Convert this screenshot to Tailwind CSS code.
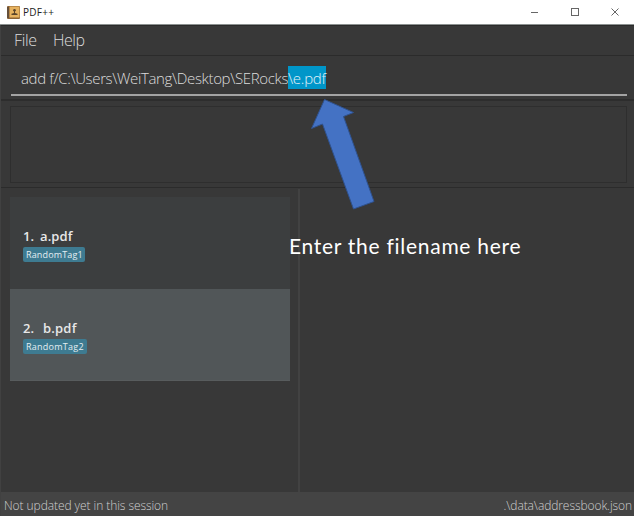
<!DOCTYPE html>
<html lang="en">
<head>
<meta charset="utf-8">
<title>PDF++</title>
<script src="https://cdn.jsdelivr.net/npm/@tailwindcss/browser@4"></script>
</head>
<body class="w-[634px] h-[516px] overflow-hidden bg-[#383838] font-['Open_Sans','Noto_Sans',sans-serif]">
<div class="relative flex flex-col w-[634px] h-[516px] border-l border-[#414141] whitespace-nowrap">
  <header class="-ml-px h-[25px] shrink-0 bg-white border-b border-[#8c9190] flex items-center justify-between pl-[7px] pr-[14px]">
    <div class="flex items-center gap-[3px]">
      <svg class="w-[13px] h-[13px]" viewBox="0 0 13 13">
        <rect width="13" height="13" rx="1" fill="#8c6335"/>
        <rect x="2.500" y="0.500" width="10" height="11" fill="#e6b25f"/>
        <path d="M1 1v11" stroke="#5a4a3c" stroke-width="1.5"/>
        <circle cx="7.5" cy="4.300" r="1.300" fill="#5b452a"/>
        <path d="M7 5h1v2l2.500 .8v1.200h-6V7.800L7 7z" fill="#5b452a"/>
      </svg>
      <span class="text-[10px] leading-[14px] text-[#222] tracking-[0.3px]">PDF++</span>
    </div>
    <svg class="w-[90px] h-[10px]" viewBox="0 0 90 10" fill="none" stroke="#666" stroke-width="1">
      <path d="M1 5.500h7M81.500 1.500l7 7M88.500 1.500l-7 7"/>
      <rect x="41.500" y="1.500" width="7" height="7"/>
    </svg>
  </header>
  <nav class="h-[31px] shrink-0 border-t border-b border-[#2b2b2b] flex items-center gap-[16px] pl-[13px] pb-[2px] text-[16px] leading-[20px] font-light text-[#dcdcdc]">
    <span class="tracking-[-0.3px]">File</span><span class="tracking-[-0.4px]">Help</span>
  </nav>
  <section class="h-[45px] shrink-0 border-b-2 border-[#2d2d2d] pl-[10px] pr-[7px] pt-[10px]">
    <div class="h-[30px] border-b-2 border-[#a4a4a4] pl-[10px] flex text-[15px] leading-[24px] font-light text-[#dcdcdc]">
      <span class="w-[267px] tracking-[-0.35px]">add f/C:\Users\WeiTang\Desktop\SERocks</span><span class="bg-[#0096c9] text-[#e0f1f8] w-[38px] h-[23px] tracking-[-0.25px]">\e.pdf</span>
    </div>
  </section>
  <section class="h-[87px] shrink-0 border-b border-[#2b2b2b] pl-[9px] pr-[7px] pt-[5px]">
    <div class="h-[77px] border border-[#2e2e2e]"></div>
  </section>
  <main class="flex flex-1 min-h-0">
    <div class="w-[299px] mt-px border-r-2 border-[#424242] pt-[8px] pl-[9px]">
      <ul class="w-[280px]">
        <li class="h-[92px] bg-[#3c3e3f] pt-[29px] pl-[13px] text-[#e8e8e8]">
          <div class="flex gap-[8px] text-[13px] leading-[20px] font-semibold"><span class="w-[9px]">1.</span><span class="tracking-[0.1px]">a.pdf</span></div>
          <span class="flex items-center mt-[1px] w-[62px] h-[15px] rounded-[2px] bg-[#3e7b91] pl-[3px] text-[9px] leading-[15px] text-[#e4eef2] font-medium tracking-[0.15px]">RandomTag1</span>
        </li>
        <li class="h-[92px] bg-[#515658] border-b border-[#585c5d] pt-[29px] pl-[13px] text-[#e8e8e8]">
          <div class="flex gap-[9px] text-[13px] leading-[20px] font-semibold"><span>2.</span><span class="tracking-[0.2px]">b.pdf</span></div>
          <span class="flex items-center mt-[1px] w-[64px] h-[15px] rounded-[2px] bg-[#3e7b91] pl-[3px] text-[9px] leading-[15px] text-[#e4eef2] font-medium tracking-[0.25px]">RandomTag2</span>
        </li>
      </ul>
    </div>
    <div class="flex-1"></div>
  </main>
  <footer class="h-[24px] shrink-0 bg-[#444] flex items-center justify-between pl-[3px] pr-[2px] pt-[3px] text-[12px] leading-[18px] font-light text-[#d0d0d0]">
    <span class="tracking-[-0.07px]">Not updated yet in this session</span><span class="tracking-[-0.08px]">.\data\addressbook.json</span>
  </footer>
  <svg class="absolute left-[308px] top-[97px] w-[68px] h-[115px]" viewBox="309 97 68 115">
    <path d="M324.500 99.500L353.500 112.500L343.500 116.500L374 201.500L353.500 209L322.500 124L311.500 128.500Z" fill="#4472c4" stroke="#2f528f" stroke-width="1"/>
  </svg>
  <div class="absolute left-[288px] top-[232px] font-['Lato','Open_Sans',sans-serif] text-[21px] leading-[28px] tracking-[0.72px] text-white">Enter the filename here</div>
</div>
</body>
</html>
